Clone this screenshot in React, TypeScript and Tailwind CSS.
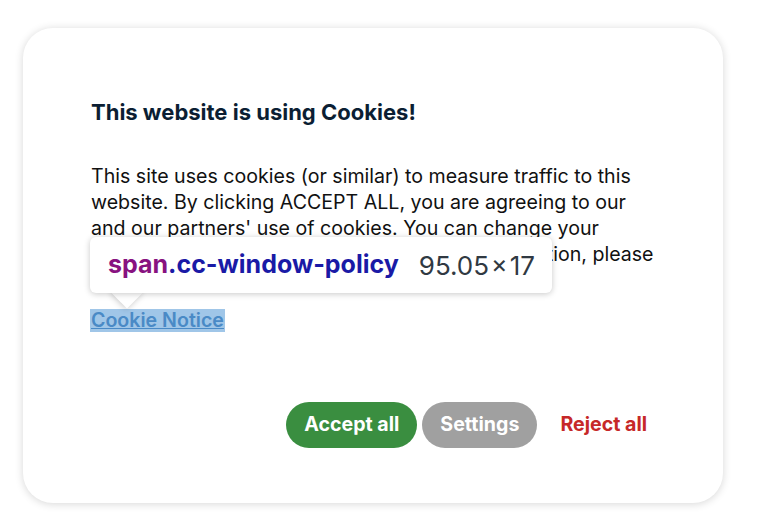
import React from "react";

export default function App() {
  return (
    <div className="min-h-screen w-full bg-white pt-[28px] pl-[23px]" style={{ fontFamily: "Inter, 'Noto Sans', sans-serif" }}>
      {/* Cookie banner card */}
      <div className="relative w-[700px] h-[475px] rounded-[30px] bg-white shadow-[0_1px_8px_rgba(0,0,0,0.16)]">
        <div className="pl-[68px] pt-[71px]">
          <h2 className="text-[22px] leading-[26px] font-bold text-[#0b1e33]">This website is using Cookies!</h2>

          <p className="mt-[38px] text-[19.6px] leading-[26px] text-[#111] whitespace-nowrap">
            This site uses cookies (or similar) to measure traffic to this
            <br />
            website. By clicking ACCEPT ALL, you are agreeing to our
            <br />
            and our partners' use of cookies. You can change your
            <br />
            cookie preferences at any time. For more information, please
          </p>

          <div className="mt-[42px] -ml-[1px] leading-[23px]">
            <span className="inline-block px-[1px] bg-[rgba(111,168,220,0.66)] text-[19.6px] font-semibold text-[#4a8ac6] underline">
              Cookie Notice
            </span>
          </div>
        </div>

        {/* Actions */}
        <div className="absolute bottom-[55px] right-[58px] flex items-center gap-[5px]">
          <button className="h-[46px] px-[18px] rounded-full bg-[#3a8e40] text-white text-[19.6px] font-bold">
            Accept all
          </button>
          <button className="h-[46px] px-[18px] rounded-full bg-[#a0a0a0] text-white text-[19.6px] font-bold">
            Settings
          </button>
          <button className="h-[46px] px-[18px] rounded-full text-[#c62828] text-[19.6px] font-bold">
            Reject all
          </button>
        </div>

        {/* Inspector tooltip */}
        <div className="absolute left-[67px] top-[209px] w-[462px] h-[56px]">
          <div className="absolute left-[26px] bottom-[-11px] w-[22px] h-[22px] rotate-45 bg-white shadow-[0_1px_6px_rgba(0,0,0,0.22)]" />
          <div className="relative h-full rounded-[6px] bg-white shadow-[0_1px_6px_rgba(0,0,0,0.22)] flex items-center pl-[18px] text-[25px] whitespace-nowrap">
            <span className="font-bold text-[#881280]">span</span>
            <span className="font-bold text-[#1a1aa6]">.cc-window-policy</span>
            <span className="ml-[20px] text-[26px] text-[#303942]">95.05</span>
            <span className="mx-[2px] text-[#303942]">×</span>
            <span className="text-[26px] text-[#303942]">17</span>
          </div>
        </div>
      </div>
    </div>
  );
}
